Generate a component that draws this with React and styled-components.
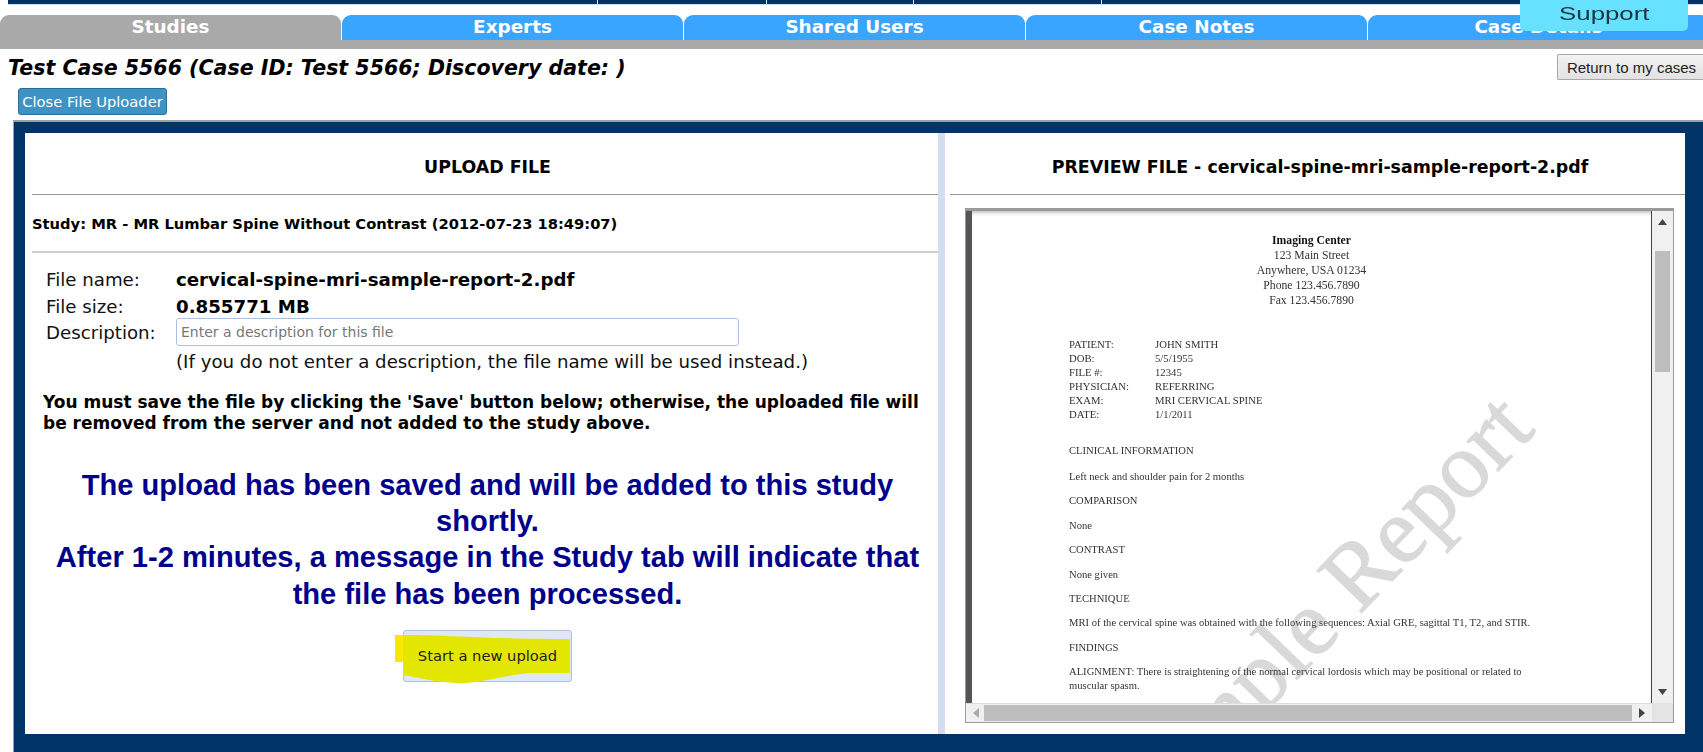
import React from "react";
import styled, { createGlobalStyle } from "styled-components";

const Global = createGlobalStyle`
  html, body { margin: 0; padding: 0; background: #fff; }
  body { font-family: "DejaVu Sans", Verdana, sans-serif; color: #000; }
`;
const Page = styled.div`
  position: relative; width: 1703px; height: 752px; overflow: hidden; display: flex; flex-direction: column;
`;
const TopBar = styled.div`
  height: 4px; margin: 0 0 1px 8px; background: #003366; border-bottom: 1px solid #d5e0ee;
  display: grid; grid-template-columns: 590px 169px 147px 188px 1fr;
`;
const TopCell = styled.div`
  border-right: 1px solid #dfe7f2; &:last-child { border-right: 0; }
`;
const TabBand = styled.div`
  margin-top: 9px; background: #fff; overflow: hidden;
  display: grid; grid-template-columns: repeat(5, 342px); width: 1703px; height: 25px; flex-shrink: 0;
`;
const TabFloor = styled.div`
  height: 9px; background: #a9a9a9; flex-shrink: 0;
`;
const Tab = styled.div`
  height: 25px; line-height: 24px; text-align: center; color: #fff; font-weight: 700; font-size: 18.4px;
  background: ${p => (p.$active ? "#a9a9a9" : "#3aa5ff")};
  border-radius: 9px 9px 0 0; border-right: 1px solid #fff; box-sizing: border-box;
`;
const Support = styled.div`
  position: absolute; left: 1520px; top: 0; width: 168px; height: 31px; box-sizing: border-box;
  background: #66e1ff; border-radius: 0 0 5px 5px; color: #1b3440; font-family: "Liberation Sans", Arial, sans-serif;
  font-size: 19px; line-height: 28px; text-align: center;
`;
const SupportText = styled.span`
  display: inline-block; transform: scaleX(1.36);
`;
const TitleRow = styled.div`
  display: flex; justify-content: space-between; align-items: flex-start; padding-top: 5px; height: 34px; flex-shrink: 0;
`;
const Title = styled.h1`
  margin: 1px 0 0 8px; font-size: 20.55px; line-height: 26px; font-weight: 700; font-style: italic; white-space: nowrap;
`;
const ReturnButton = styled.button`
  width: 146px; height: 26px; box-sizing: border-box; padding: 0 0 0 2px; font-size: 15px; color: #222;
  font-family: "Liberation Sans", Arial, sans-serif; background: linear-gradient(#f2f2f2, #e2e2e2); border: 1px solid #a8a8a8; border-right: 0; border-radius: 2px 0 0 2px;
`;
const CloseButton = styled.button`
  align-self: flex-start; margin-left: 18px; width: 149px; height: 27px; box-sizing: border-box; padding: 0; flex-shrink: 0;
  font-family: "DejaVu Sans", sans-serif; font-size: 14.7px; color: #fff; background: #3f93c4; border: 1px solid #2a6f9c; border-radius: 3px; white-space: nowrap;
`;
const Frame = styled.div`
  margin: 5px 0 0 13px; flex: 1; box-sizing: border-box; background: #003366; min-height: 0;
  border-top: 2px solid #a0a0a0; border-left: 1px solid #a0a0a0;
  padding: 11px 18px 18px 11px; display: grid; grid-template-columns: 913px 7px 740px;
`;
const Column = styled.section`
  background: #fff; display: flex; flex-direction: column; min-height: 0;
`;
const Divider = styled.div`
  background: #d3dff1;
`;
const Heading = styled.h2`
  margin: 0 0 0 ${p => (p.$right ? 5 : 7)}px; height: 62px; box-sizing: border-box; padding: 24px 0 0 5px; font-size: 17.4px; line-height: 20px; font-weight: 700;
  text-align: center; border-bottom: 1px solid #999; white-space: nowrap;
`;
const Study = styled.div`
  margin-left: 7px; height: 58px; box-sizing: border-box; line-height: 58px; font-size: 14.7px; font-weight: 700;
  border-bottom: 2px solid #cfcfcf; white-space: nowrap;
`;
const Form = styled.div`
  margin: 13px 0 0 21px; display: grid; grid-template-columns: 130px 1fr; font-size: 18.2px;
`;
const Label = styled.div`
  height: 26.5px; line-height: 27px; color: #111;
`;
const Value = styled.div`
  height: 26.5px; line-height: 27px; font-weight: 700; white-space: nowrap;
`;
const DescInput = styled.input`
  width: 563px; height: 28px; box-sizing: border-box; padding: 0 4px; font-family: "DejaVu Sans", sans-serif; font-size: 14px;
  border: 1px solid #a9c2dd; border-radius: 3px; outline: 0; margin-top: -1px;
  &::placeholder { color: #777; opacity: 1; }
`;
const Hint = styled.div`
  grid-column: 2; margin-top: 2px; line-height: 28px; color: #111; white-space: nowrap;
`;
const Warning = styled.p`
  margin: 16px 0 0 18px; width: 885px; font-size: 17px; line-height: 21px; font-weight: 700;
`;
const Saved = styled.div`
  margin: 33px 0 0 12px; text-align: center; font-family: "Liberation Sans", Arial, sans-serif; font-weight: 700;
  font-size: 29.1px; line-height: 36.2px; color: #00008b;
`;
const UploadWrap = styled.div`
  position: relative; align-self: flex-start; margin: 18px 0 0 378px;
`;
const UploadButton = styled.button`
  display: block; position: relative; width: 169px; height: 52px; box-sizing: border-box; padding: 0; background: #e1e8f5;
  border: 1px solid #a9c2dd; border-radius: 3px; font-family: "DejaVu Sans", sans-serif; font-size: 14.7px; color: #222;
`;
const UploadLabel = styled.span`
  position: relative;
`;
const Highlight = styled.svg`
  position: absolute; left: -9px; top: -1px; width: 180px; height: 56px; pointer-events: none;
`;
const Preview = styled.div`
  margin: 13px 11px 0 20px; height: 515px; box-sizing: border-box; display: grid;
  grid-template-columns: 1fr 21px; grid-template-rows: 1fr 19px; border: 1px solid #9a9a9a; border-top: 3px solid #9a9a9a;
  background: #f0f0f0; overflow: hidden; min-height: 0;
`;
const Sheet = styled.div`
  position: relative; overflow: hidden; background: #fff; border-left: 6px solid #555; border-right: 1px solid #444;
  font-family: "Liberation Serif", "Times New Roman", serif; color: #333; padding: 22px 0 0 97px; filter: blur(0.35px);
  box-shadow: inset 0 4px 4px -3px #aaa;
`;
const Letterhead = styled.div`
  margin-left: -97px; text-align: center; line-height: 15px; font-size: 11.7px;
  strong { color: #111; }
`;
const Meta = styled.div`
  position: relative; margin-top: 29px; display: grid; grid-template-columns: 86px 1fr; line-height: 14px; font-size: 10.7px;
`;
const ReportLine = styled.div`
  position: relative; font-size: 10.6px; line-height: 14px; margin-top: ${p => p.$gap ?? 10.4}px; white-space: nowrap;
`;
const Watermark = styled.div`
  position: absolute; left: 175px; top: 545px; font-size: 94px; line-height: 1; color: #d9d9d9; white-space: nowrap;
  -webkit-text-stroke: 1.2px #d9d9d9;
  transform: rotate(-46deg); transform-origin: 0 79px;
`;
const VScroll = styled.div`
  display: flex; flex-direction: column; align-items: center; background: #f0f0f0; position: relative;
`;
const HScroll = styled.div`
  grid-column: 1; display: flex; align-items: center; background: #f0f0f0; border-top: 1px solid #ddd; box-sizing: border-box;
`;
const Corner = styled.div`
  background: #e4e4e4;
`;
const VThumb = styled.div`
  width: 15px; height: 121px; margin-top: 40px; background: #bdbdbd; flex-shrink: 0;
`;
const HThumb = styled.div`
  flex: 1; height: 16px; background: #bdbdbd; margin: 0 7px 0 5px;
`;
const Arrow = styled.svg`
  flex-shrink: 0; fill: ${p => p.$fill || "#444"};
  margin: ${p => p.$margin || 0};
  ${p => p.$bottom && "position: absolute; bottom: 8px;"}
  ${p => p.$top && "position: absolute; top: 8px;"}
`;

const meta = [
  ["PATIENT:", "JOHN SMITH"], ["DOB:", "5/5/1955"], ["FILE #:", "12345"],
  ["PHYSICIAN:", "REFERRING"], ["EXAM:", "MRI CERVICAL SPINE"], ["DATE:", "1/1/2011"],
];
const report = [
  "COMPARISON", "None", "CONTRAST", "None given", "TECHNIQUE",
  "MRI of the cervical spine was obtained with the following sequences: Axial GRE, sagittal T1, T2, and STIR.",
  "FINDINGS", "ALIGNMENT: There is straightening of the normal cervical lordosis which may be positional or related to",
];

export default function App() {
  return (
    <Page>
      <Global />
      <TopBar>{[0, 1, 2, 3, 4].map(i => <TopCell key={i} />)}</TopBar>
      <TabBand>
        <Tab $active>Studies</Tab>
        <Tab>Experts</Tab>
        <Tab>Shared Users</Tab>
        <Tab>Case Notes</Tab>
        <Tab>Case Details</Tab>
      </TabBand>
      <TabFloor />
      <Support><SupportText>Support</SupportText></Support>
      <TitleRow>
        <Title>Test Case 5566 (Case ID: Test 5566; Discovery date: )</Title>
        <ReturnButton>Return to my cases</ReturnButton>
      </TitleRow>
      <CloseButton>Close File Uploader</CloseButton>
      <Frame>
        <Column>
          <Heading>UPLOAD FILE</Heading>
          <Study>Study: MR - MR Lumbar Spine Without Contrast (2012-07-23 18:49:07)</Study>
          <Form>
            <Label>File name:</Label><Value>cervical-spine-mri-sample-report-2.pdf</Value>
            <Label>File size:</Label><Value>0.855771 MB</Value>
            <Label>Description:</Label><DescInput placeholder="Enter a description for this file" />
            <Hint>(If you do not enter a description, the file name will be used instead.)</Hint>
          </Form>
          <Warning>You must save the file by clicking the 'Save' button below; otherwise, the uploaded file will be removed from the server and not added to the study above.</Warning>
          <Saved>
            The upload has been saved and will be added to this study shortly.<br />
            After 1-2 minutes, a message in the Study tab will indicate that the file has been processed.
          </Saved>
          <UploadWrap>
            <UploadButton>
              <Highlight viewBox="0 0 180 56" aria-hidden="true">
                <path d="M0 5H8V32H0Z" fill="#ffe600" />
                <path d="M8 5C60 5 80 9 175 9V43H135C110 45 85 53 65 53C45 53 30 49 8 45Z" fill="#e2e600" />
              </Highlight>
              <UploadLabel>Start a new upload</UploadLabel>
            </UploadButton>
          </UploadWrap>
        </Column>
        <Divider />
        <Column>
          <Heading $right>PREVIEW FILE - cervical-spine-mri-sample-report-2.pdf</Heading>
          <Preview>
            <Sheet>
              <Watermark>Sample Report</Watermark>
              <Letterhead>
                <strong>Imaging Center</strong><br />123 Main Street<br />Anywhere, USA 01234<br />Phone 123.456.7890<br />Fax 123.456.7890
              </Letterhead>
              <Meta>
                {meta.map(([k, v]) => (
                  <React.Fragment key={k}><span>{k}</span><span>{v}</span></React.Fragment>
                ))}
              </Meta>
              <ReportLine $gap={23}>CLINICAL INFORMATION</ReportLine>
              <ReportLine $gap={12}>Left neck and shoulder pain for 2 months</ReportLine>
              {report.map(t => <ReportLine key={t}>{t}</ReportLine>)}
              <ReportLine $gap={0}>muscular spasm.</ReportLine>
            </Sheet>
            <VScroll>
              <Arrow $top width="9" height="6" viewBox="0 0 9 6"><path d="M4.5 0L9 6H0Z" /></Arrow>
              <VThumb />
              <Arrow $bottom width="9" height="6" viewBox="0 0 9 6"><path d="M4.5 6L0 0H9Z" /></Arrow>
            </VScroll>
            <HScroll>
              <Arrow $fill="#aaa" $margin="0 0 0 7px" width="6" height="10" viewBox="0 0 6 10"><path d="M0 5L6 0V10Z" /></Arrow>
              <HThumb />
              <Arrow $margin="0 7px 0 0" width="6" height="10" viewBox="0 0 6 10"><path d="M6 5L0 0V10Z" /></Arrow>
            </HScroll>
            <Corner />
          </Preview>
        </Column>
      </Frame>
    </Page>
  );
}
